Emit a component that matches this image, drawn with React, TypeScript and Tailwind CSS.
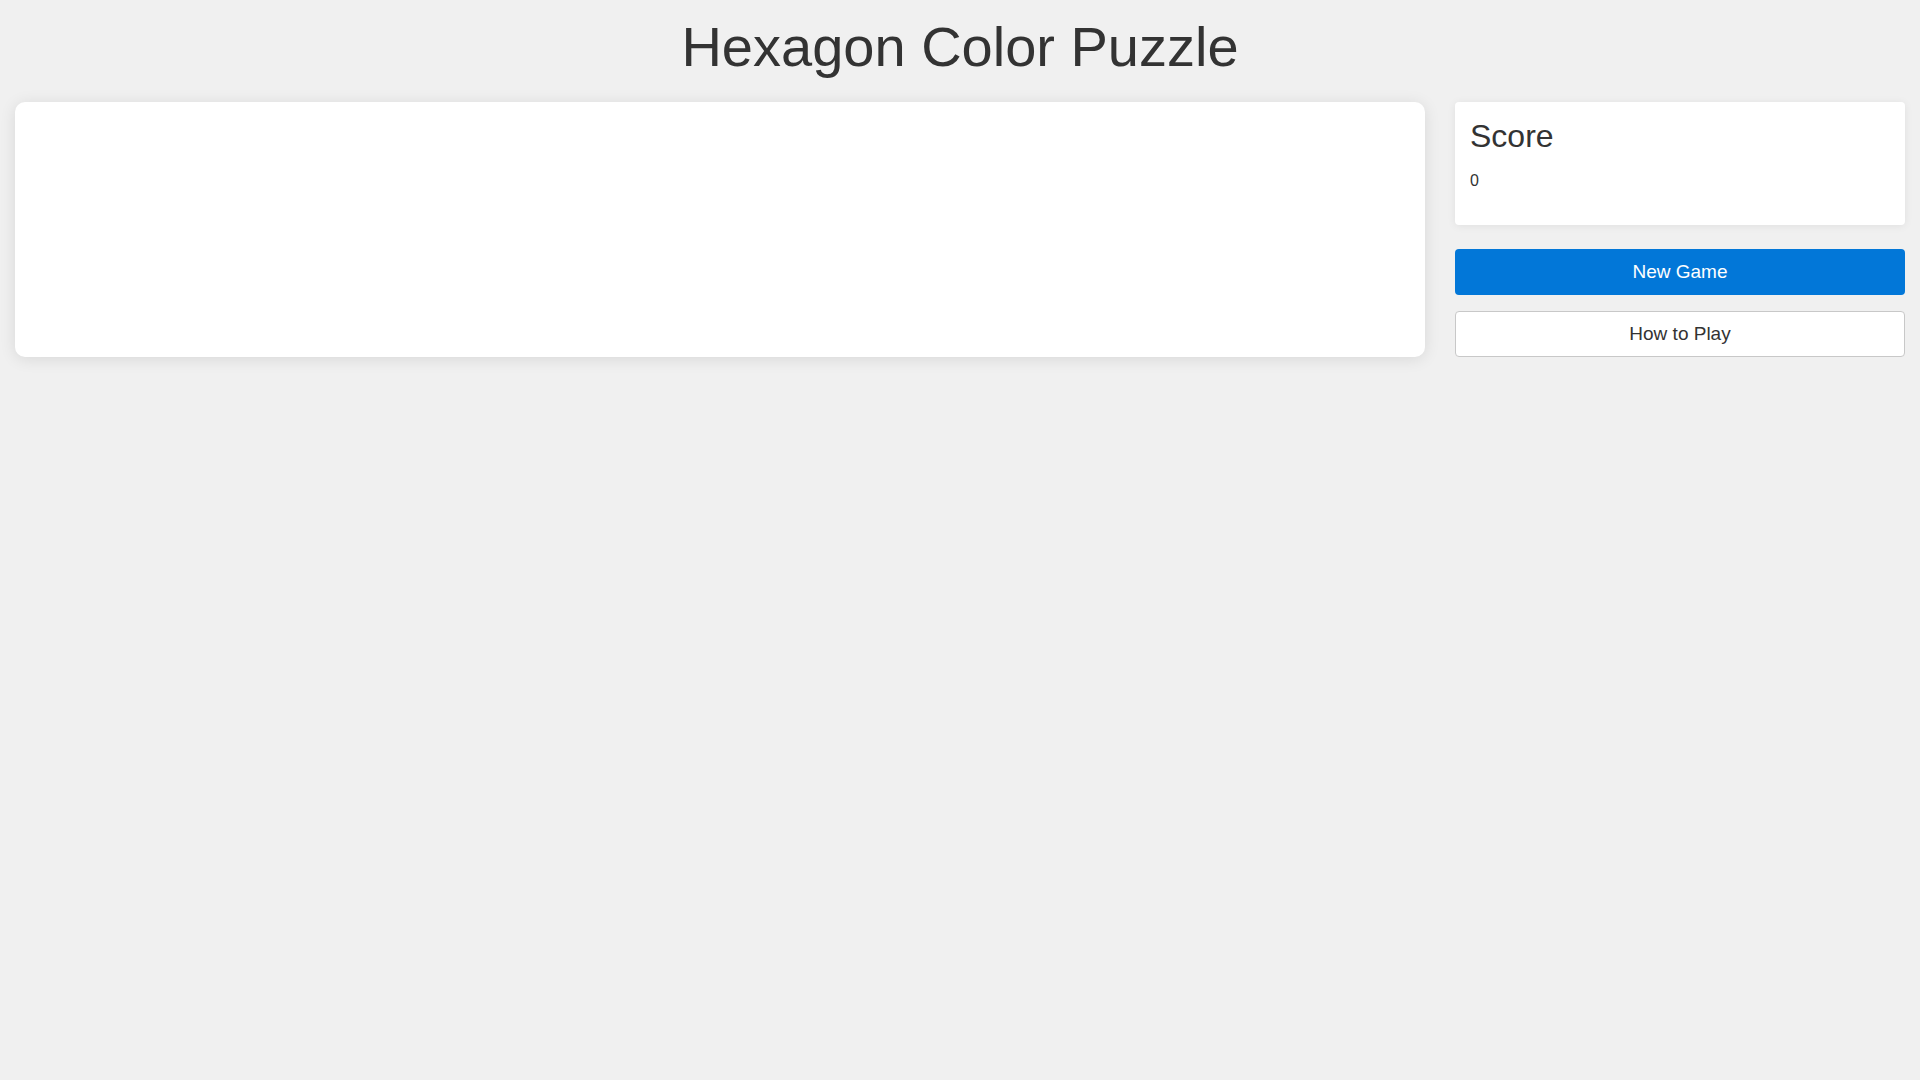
import React from 'react';

export default function App() {
  const score = 0;

  return (
    <div className="min-h-screen bg-[#f0f0f0] px-[15px] pt-[15px] text-[#333] font-['Liberation_Sans',Arial,sans-serif]">
      {/* Title */}
      <h1 className="text-center text-[56px] leading-[64px] font-normal mb-[23px]">
        Hexagon Color Puzzle
      </h1>

      <div className="grid grid-cols-[1fr_450px] gap-[30px] items-stretch">
        {/* Board */}
        <div className="bg-white rounded-[10px] shadow-[0_2px_16px_rgba(0,0,0,0.1)]" />

        {/* Sidebar */}
        <div className="flex flex-col">
          <div className="bg-white rounded-[4px] shadow-[0_1px_8px_rgba(0,0,0,0.07)] p-[15px]">
            <h2 className="text-[32px] leading-[38px] font-normal">Score</h2>
            <p className="mt-[14px] mb-[17px] text-[16px] leading-[24px]">{score}</p>
          </div>

          <button className="mt-[24px] h-[46px] rounded-[4px] bg-[#0277d8] text-white text-[19px]">
            New Game
          </button>
          <button className="mt-[16px] h-[46px] rounded-[4px] bg-white border border-[#c8c8c8] text-[#333] text-[19px]">
            How to Play
          </button>
        </div>
      </div>
    </div>
  );
}
